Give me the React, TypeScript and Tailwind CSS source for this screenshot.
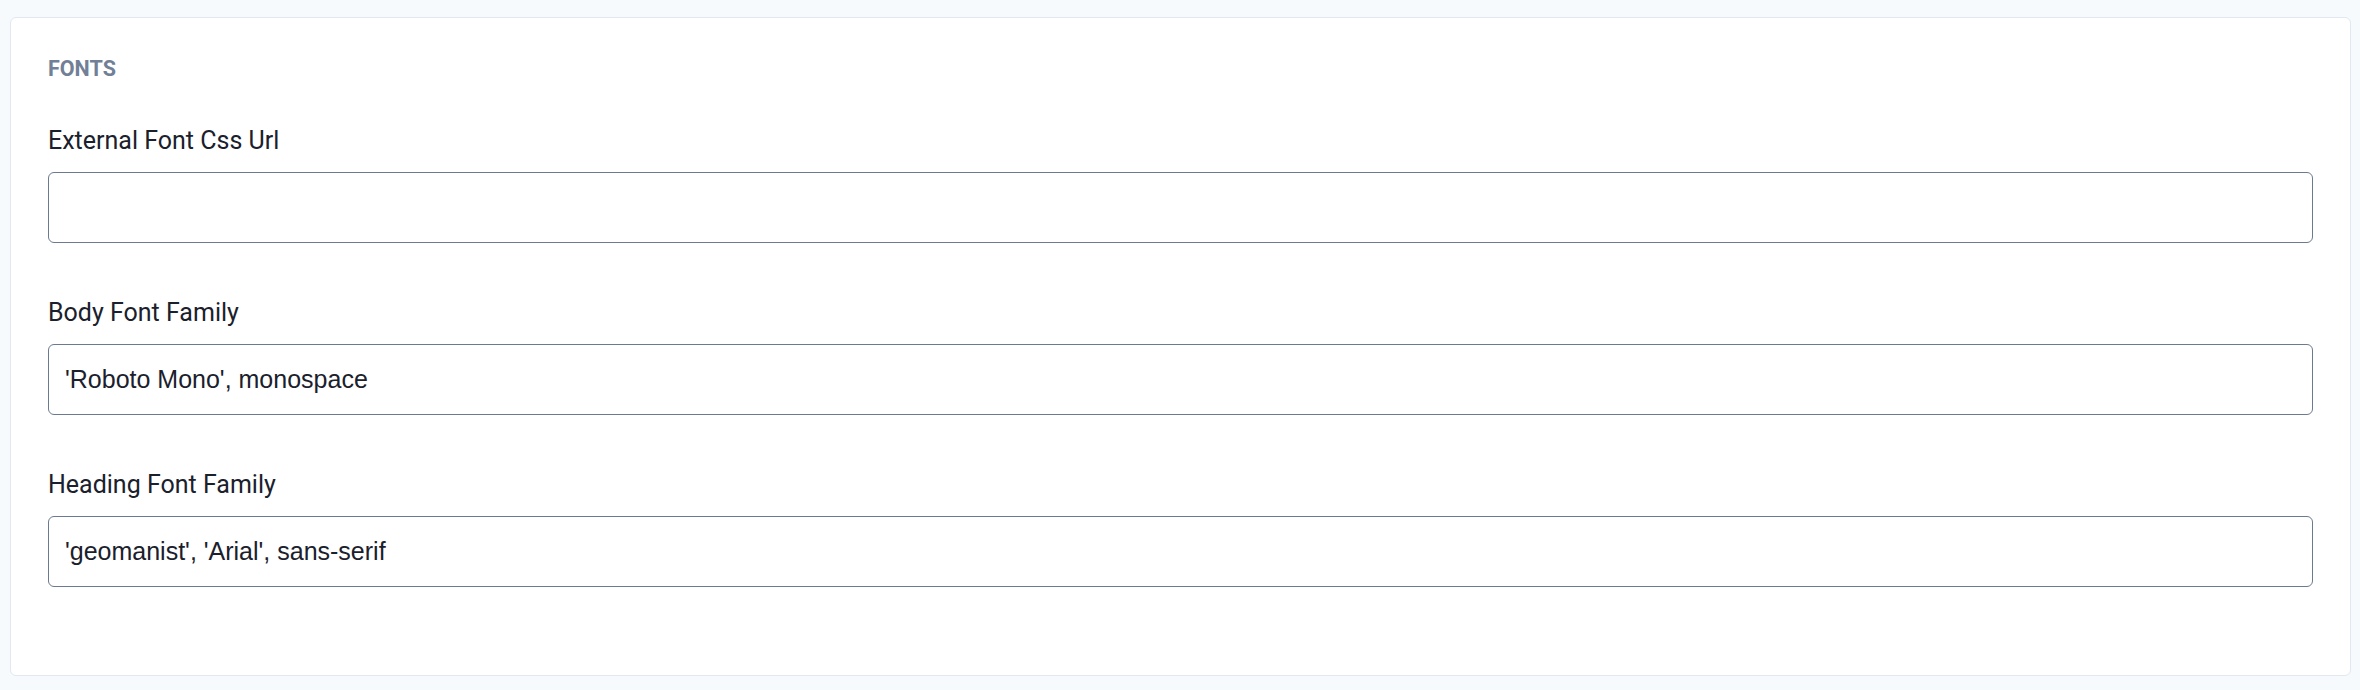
const fields = [
  { key: 'externalFontCssUrl', label: 'External Font Css Url', value: '' },
  { key: 'bodyFontFamily', label: 'Body Font Family', value: "'Roboto Mono', monospace" },
  { key: 'headingFontFamily', label: 'Heading Font Family', value: "'geomanist', 'Arial', sans-serif" },
];

export default function App() {
  return (
    <div className="w-full h-[690px] bg-[#f7fafc] pt-[17px] pl-[10px] pr-[9px] font-['Roboto',sans-serif]">
      <div className="h-[659px] bg-white border border-[#e2e8f0] rounded-[6px] px-[37px] pt-[35px]">
        <h2 className="text-[21.5px] leading-[32px] font-bold uppercase text-[#718096]">Fonts</h2>

        <div className="mt-[38px] flex flex-col gap-[52px]">
          {fields.map((field) => (
            <div key={field.key} className="flex flex-col">
              <label
                htmlFor={field.key}
                className="text-[25px] leading-[36px] text-[#1a202c] mb-[13px]"
              >
                {field.label}
              </label>
              <input
                id={field.key}
                type="text"
                defaultValue={field.value}
                className="h-[71px] w-full border border-[#6b7a90] rounded-[6px] pl-4 pr-4 bg-white text-[25px] text-[#1a202c] font-['Liberation_Sans',Arial,sans-serif] outline-none"
              />
            </div>
          ))}
        </div>
      </div>
    </div>
  );
}
